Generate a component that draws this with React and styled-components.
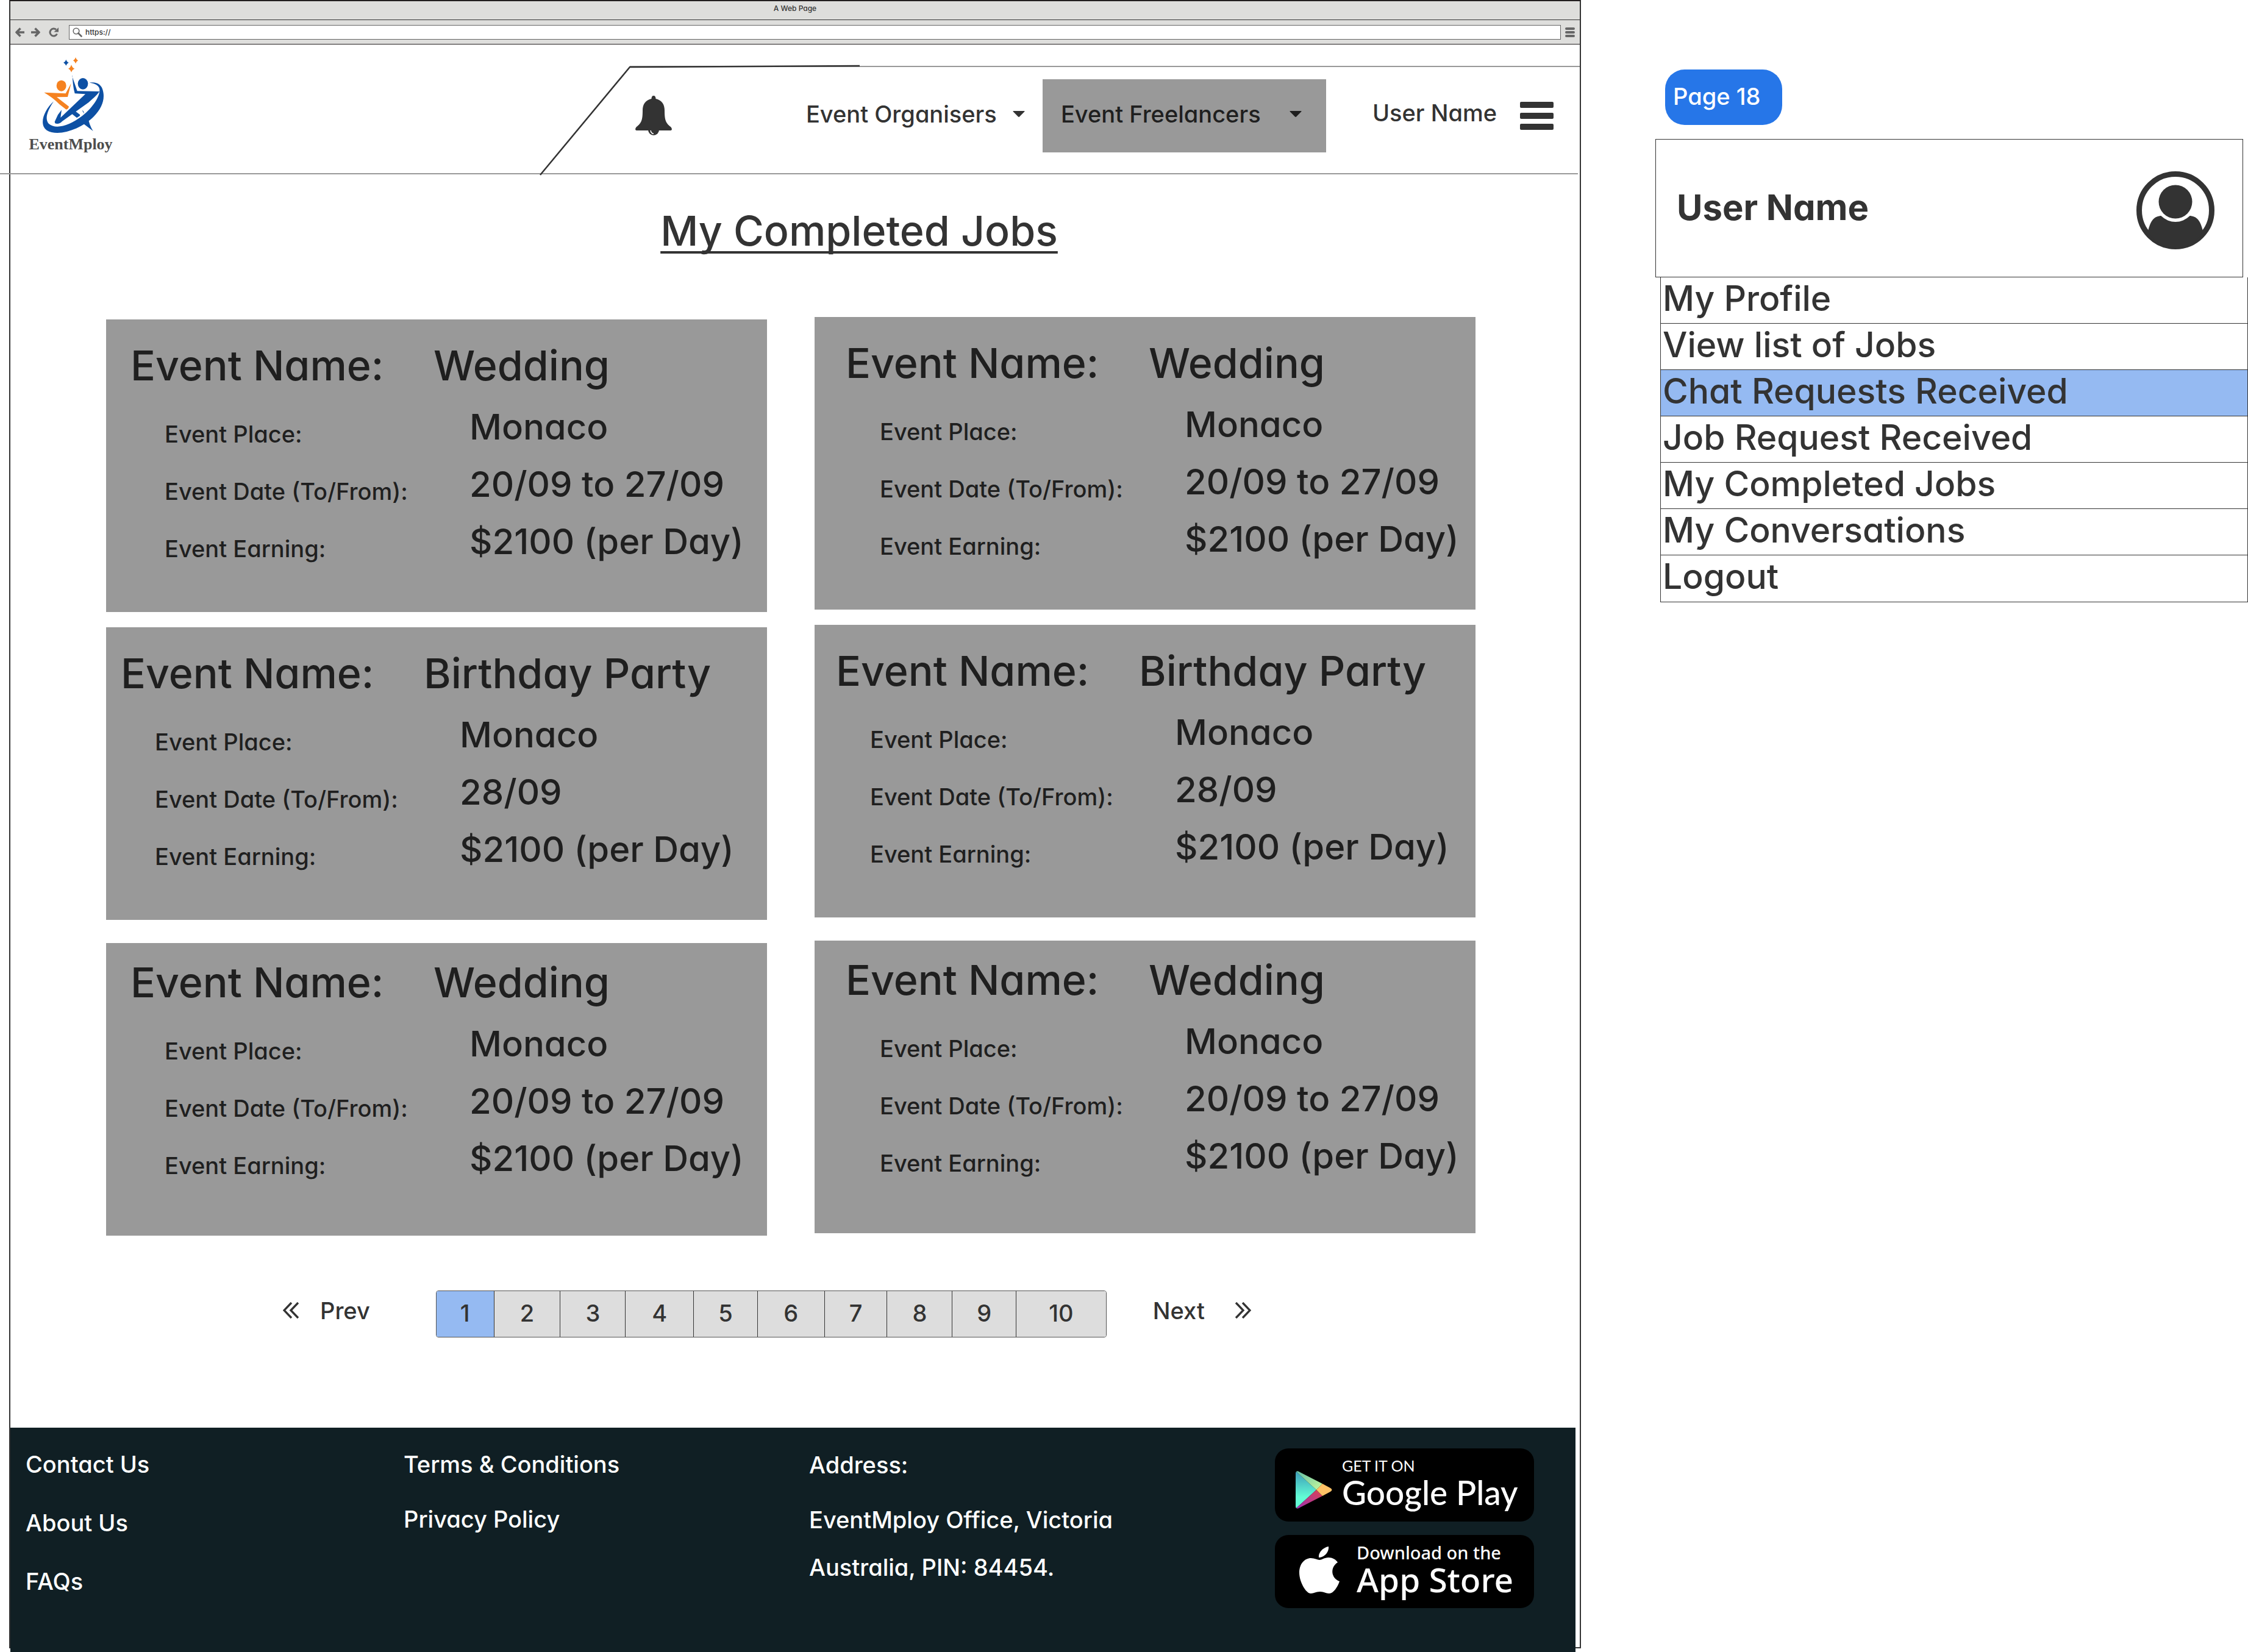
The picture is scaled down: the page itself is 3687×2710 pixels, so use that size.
import React from "react";
import styled, { createGlobalStyle, css } from "styled-components";

const INK = "#333333";
const CARD_INK = "#1f1f1f";
const GREY = "#999999";
const BLUE = "#95baf2";

const GlobalStyle = createGlobalStyle`
  *, *::before, *::after { box-sizing: border-box; }
  body {
    margin: 0;
    background: #ffffff;
    color: ${INK};
    font-family: Inter, "Liberation Sans", sans-serif;
    font-feature-settings: "cv11";
    font-size: 38px;
    font-weight: 500;
    line-height: 46px;
  }
  h1, h2, p, ul, dl, dd { margin: 0; padding: 0; font-weight: inherit; }
  ul { list-style: none; }
  a { color: inherit; text-decoration: none; }
  button, input { font: inherit; font-feature-settings: inherit; color: inherit; }
`;

const Page = styled.div`
  display: grid;
  grid-template-columns: minmax(0, 2593fr) minmax(0, 1094fr);
  align-items: start;
  overflow: hidden;
`;

const BrowserWindow = styled.div`
  margin: 0 0 8px 15px;
  border: 2px solid ${INK};
  border-top-color: #231f20;
`;

const TitleBar = styled.div`
  height: 31px;
  padding-top: 3px;
  background: #dededc;
  border-bottom: 1px solid ${INK};
  text-align: center;
  font-size: 12px;
  line-height: 18px;
`;

const Toolbar = styled.div`
  display: flex;
  align-items: center;
  height: 40px;
  padding: 0 8px;
  background: #dededc;
  border-bottom: 1px solid #231f20;
  color: #666666;
`;

const ToolButton = styled.button`
  display: flex;
  padding: 0;
  margin-right: ${(p) => p.$gap || 0}px;
  border: 0;
  background: none;
`;

const UrlBox = styled.label`
  flex: 1;
  display: flex;
  align-items: center;
  gap: 5px;
  height: 24px;
  margin-right: 7px;
  padding: 0 5px;
  background: #ffffff;
  border: 1px solid #666666;
`;

const UrlInput = styled.input`
  flex: 1;
  min-width: 0;
  padding: 0;
  border: 0;
  outline: 0;
  color: ${INK};
  font-size: 12px;
  line-height: 18px;
`;

const Header = styled.header`
  display: flex;
  align-items: flex-start;
  height: 213px;
  margin: 0 3px 0 -17px;
  padding-left: 40px;
  border-bottom: 2px solid ${GREY};
`;

const Brand = styled.a`
  display: flex;
  flex-direction: column;
  align-items: center;
  width: 152px;
  padding-top: 8px;
  color: #4d4d4d;
  font-family: "Liberation Serif", serif;
  font-size: 26px;
  font-weight: 700;
  line-height: 28px;
`;

const NavPanel = styled.div`
  position: relative;
  flex: 1;
  display: flex;
  align-items: center;
  height: 162px;
  margin: 35px -3px 0 841px;
  padding: 0 43px 0 9px;
  border-top: 2px solid ${GREY};
`;

const PanelOutline = styled.svg`
  position: absolute;
  left: -149px;
  top: -4px;
`;

const NavLinks = styled.nav`
  flex: 1;
  display: flex;
  align-items: center;
  justify-content: flex-end;
`;

const IconButton = styled.button`
  display: flex;
  padding: 0;
  border: 0;
  background: none;
`;

const NavButton = styled.button`
  display: flex;
  align-items: center;
  justify-content: space-between;
  height: 120px;
  border: 0;
  background: none;
  white-space: nowrap;
  width: 418px;
  padding: 0 29px 6px 30px;
  ${(p) =>
    p.$active &&
    css`
      width: 465px;
      padding: 0 40px 6px 30px;
      background: ${GREY};
      color: ${CARD_INK};
    `}
`;

const UserLink = styled.a`
  padding: 0 38px 10px 76px;
  white-space: nowrap;
`;

const PageTitle = styled.h1`
  padding: 48px 0 98px 210px;
  text-align: center;
  font-size: 68px;
  line-height: 88px;
  text-decoration: underline;
  text-decoration-thickness: 4px;
  text-underline-offset: 9px;
  text-decoration-skip-ink: none;
`;

const Board = styled.main`
  display: grid;
  grid-template-columns: minmax(0, 1fr) minmax(0, 1fr);
  gap: 78px;
  padding: 0 171px 0 157px;
`;

const Column = styled.section`
  display: flex;
  flex-direction: column;
  padding-top: ${(p) => (p.$left ? 4 : 0)}px;
`;

const Card = styled.article`
  min-height: 480px;
  margin-bottom: ${(p) => (p.$last ? 0 : p.$gap)}px;
  padding-top: ${(p) => (p.$last ? 24 : 35)}px;
  padding-left: ${(p) => p.$inset}px;
  background: ${GREY};
  color: ${CARD_INK};
  white-space: nowrap;
`;

const CardTitle = styled.h2`
  display: grid;
  grid-template-columns: 497px 1fr;
  font-size: 68px;
  line-height: 80px;
`;

const Details = styled.dl`
  padding-top: 2px;
`;

const Detail = styled.div`
  display: grid;
  grid-template-columns: 500px 1fr;
  align-items: end;
  height: 94px;
  padding-left: 56px;
`;

const Value = styled.dd`
  font-size: 58px;
  line-height: 70px;
`;

const Pagination = styled.nav`
  display: flex;
  align-items: center;
  padding: 90px 0 148px 447px;
`;

const StepLink = styled.a`
  display: flex;
  align-items: center;
  gap: ${(p) => p.$gap}px;
  padding-bottom: 12px;
`;

const PageList = styled.ul`
  display: grid;
  grid-template-columns: 94fr 109fr 107fr 112fr 105fr 110fr 103fr 107fr 105fr 148fr;
  width: 1100px;
  height: 77px;
  margin: 0 76px 0 108px;
  border: 1px solid #555555;
  border-radius: 4px;
  overflow: hidden;
`;

const PageItem = styled.li`
  display: flex;
  background: ${(p) => (p.$active ? BLUE : "#dddddd")};
  & + & { border-left: 1px solid ${INK}; }
`;

const PageButton = styled.button`
  flex: 1;
  padding: 0 0 4px;
  border: 0;
  background: none;
`;

const Footer = styled.footer`
  display: flex;
  height: 370px;
  margin: 0 7px -10px 0;
  padding: 34px 68px 0 25px;
  background: #101f24;
  color: #ffffff;
  white-space: nowrap;
`;

const FooterColumn = styled.ul`
  display: flex;
  flex-direction: column;
  gap: ${(p) => p.$gap}px;
  width: ${(p) => p.$width}px;
  padding-top: 3px;
`;

const Address = styled.address`
  flex: 1;
  padding-top: 4px;
  font-style: normal;
`;

const AddressLine = styled.p`
  padding-bottom: ${(p) => (p.$wide ? 44 : 32)}px;
`;

const Stores = styled.div`
  display: flex;
  flex-direction: column;
  gap: 22px;
`;

const StoreBadge = styled.a`
  display: flex;
  align-items: center;
  gap: ${(p) => p.$gap}px;
  width: 425px;
  height: 120px;
  padding: ${(p) => p.$pad};
  border-radius: 22px;
  background: #000000;
`;

const StoreText = styled.span`
  display: flex;
  flex-direction: column;
  padding-bottom: ${(p) => p.$lift}px;
  font-family: ${(p) => p.$face}, sans-serif;
`;

const StoreSmall = styled.span`
  font-size: ${(p) => p.$size}px;
  font-weight: ${(p) => p.$weight};
  line-height: 30px;
`;

const StoreName = styled.span`
  font-size: 55px;
  line-height: 58px;
`;

const Side = styled.aside`
  padding: 114px 0 0 122px;
`;

const PageTag = styled.div`
  width: 192px;
  margin: 0 0 23px 16px;
  padding: 21px 0 24px 13px;
  border-radius: 32px;
  background: #2676e8;
  color: #ffffff;
`;

const UserBox = styled.div`
  display: flex;
  align-items: center;
  justify-content: space-between;
  height: 227px;
  margin-right: 8px;
  padding: 6px 46px 0 34px;
  border: 1px solid ${INK};
`;

const UserHeading = styled.h2`
  padding-bottom: 10px;
  font-size: 58px;
  line-height: 70px;
  font-weight: 700;
`;

const Menu = styled.ul`
  margin-left: 8px;
  border: 1px solid ${INK};
  border-top-width: 0;
`;

const MenuItem = styled.li`
  height: 76px;
  border-bottom: 1px solid ${INK};
  background: ${(p) => (p.$active ? BLUE : "transparent")};
  &:last-child { border-bottom: 0; }
`;

const MenuLink = styled.a`
  display: block;
  padding-left: 3px;
  font-size: 57px;
  line-height: 70px;
`;

const Arrow = ({ back }) => (
  <svg width="16" height="16" viewBox="0 0 16 16" aria-hidden="true">
    <path
      d={back ? "M15 8H3M8.500 1.500 2 8l6.500 6.500" : "M1 8h12M7.500 1.500 14 8l-6.500 6.500"}
      fill="none" stroke="currentColor" strokeWidth="3.600" strokeLinejoin="round" />
  </svg>
);

const Reload = () => (
  <svg width="18" height="16" viewBox="0 0 18 16" aria-hidden="true">
    <path d="M14.500 10.500A6 6 0 1 1 13 3.500" fill="none" stroke="currentColor" strokeWidth="3" />
    <path d="M17 0v7.500H9.500z" fill="currentColor" />
  </svg>
);

const Search = () => (
  <svg width="16" height="16" viewBox="0 0 16 16" aria-hidden="true">
    <circle cx="6" cy="6" r="4.800" fill="none" stroke="#666" strokeWidth="1.600" />
    <path d="m9.500 9.500 5 5" stroke="#666" strokeWidth="2.600" strokeLinecap="round" />
  </svg>
);

const Bars = ({ width, height, thick }) => (
  <svg width={width} height={height} aria-hidden="true">
    {[0, (height - thick) / 2, height - thick].map((y) => (
      <rect key={y} y={y} width={width} height={thick} rx="2" fill="currentColor" />
    ))}
  </svg>
);

const Caret = () => (
  <svg width="20" height="10" viewBox="0 0 20 10" aria-hidden="true">
    <path d="M1 0h18q1 0 .4 1L11 9.500q-1 .8-2 0L.6 1Q0 0 1 0z" fill="currentColor" />
  </svg>
);

const Bell = () => (
  <svg width="60" height="66" viewBox="0 0 60 66" aria-hidden="true">
    <path d="M30 0c2.500 0 3.500 2 3.500 5C43 7 48 14 48 24c0 16 2 21 10 27 2 2 3 6 0 6H2c-3 0-2-4 0-6 8-6 10-11 10-27C12 14 17 7 26.500 5c0-3 1-5 3.500-5z" fill={INK} />
    <path d="M21 56a9 9 0 0 0 18 0z" fill={INK} />
    <path d="M25 57q1 5 5 5.500" fill="none" stroke="#fff" strokeWidth="1.500" />
  </svg>
);

const Chevrons = ({ back }) => (
  <svg width="26" height="27" viewBox="0 0 26 27" aria-hidden="true">
    <path
      d={back ? "M14 1 2 13.500 14 26M25 1 13 13.500 25 26" : "M12 1l12 12.500L12 26M1 1l12 12.500L1 26"}
      fill="none" stroke={INK} strokeWidth="3.400" />
  </svg>
);

const Avatar = () => (
  <svg width="128" height="128" viewBox="0 0 128 128" role="img" aria-label="User">
    <circle cx="64" cy="64" r="59.500" fill="#fff" stroke={INK} strokeWidth="9" />
    <path d="M19 98C23 82 28 73 42 73h44c14 0 19 9 23 25-9 18-27 27-45 27S28 116 19 98z" fill={INK} />
    <circle cx="64" cy="50" r="33" fill="#fff" />
    <circle cx="64" cy="50" r="27.500" fill={INK} />
  </svg>
);

const Logo = () => (
  <svg width="152" height="142" viewBox="0 0 456 426" aria-hidden="true">
    <g fill="#0d50a4">
      <path d="M205 50q4 12 13 15-9 4-13 15-4-11-13-15 9-3 13-15z" />
      <ellipse cx="288" cy="169" rx="25" ry="28" />
      <path d="M234 130l26 75 110 2c-14 20-34 36-54 54L186 354c-10 12-24 14-35 10l-2-8 16-34 18-24-5 38 122-116-52-3c-8-28-10-57-12-87z" />
      <path d="M240 296l32 24q4 4 0 8l-14 9-32-26z" />
      <path d="M320 164c34-6 62 6 68 46 8 42-10 84-46 120-64 64-176 102-232 68-40-28-14-98 34-142-30 46-46 84-24 110 34 30 102 10 164-38 58-46 88-100 86-130-2-22-22-30-50-34z" />
      <path d="M284 300q10 4 9 16-5-10-9-16z" />
      <path d="M286 362l28-26q4 34 24 66z" />
    </g>
    <g fill="#f58220">
      <path d="M252 39q3 12 12 16-9 4-12 15-3-11-12-15 9-4 12-16z" />
      <path d="M231 75q4 16 16 20-12 5-16 18-4-13-15-18 11-4 15-20z" />
      <ellipse cx="182" cy="179" rx="24" ry="27" />
      <path d="M97 212l106 5 27-50-17 67-54 1 60 46q-2 12-13 15l-34-26c-22-24-48-42-75-58z" />
    </g>
  </svg>
);

const PlayMark = () => (
  <svg width="60" height="62" viewBox="0 0 60 62" aria-hidden="true">
    <defs>
      <linearGradient id="playBlue" x1="0" y1="0" x2="0" y2="1">
        <stop offset="0" stopColor="#3c9cb8" />
        <stop offset=".7" stopColor="#62fcd5" />
      </linearGradient>
      <linearGradient id="playGreen" x1="0" y1="0" x2="1" y2="1">
        <stop offset="0" stopColor="#62bfa6" />
        <stop offset="1" stopColor="#c8fa9c" />
      </linearGradient>
      <linearGradient id="playRed" x1="0" y1="1" x2="1" y2="0">
        <stop offset="0" stopColor="#9c2fb0" />
        <stop offset="1" stopColor="#dc4354" />
      </linearGradient>
    </defs>
    <path d="M1 1 34 31 1 61Q0 60 0 58V4Q0 2 1 1z" fill="url(#playBlue)" />
    <path d="M1 1Q3-1 7 2L44 21 34 31z" fill="url(#playGreen)" />
    <path d="M1 61q2 2 6-1l37-19-10-10z" fill="url(#playRed)" />
    <path d="m44 21 13 7q5 3 0 6l-13 7-10-10z" fill="#ffc266" />
  </svg>
);

const AppleMark = () => (
  <svg width="66" height="78" viewBox="0 0 66 78" aria-hidden="true">
    <path d="M48 0c1 9-7 18-16 18-1-9 8-17 16-18z" fill="#fff" />
    <path d="M33 22c4 0 8-4 15-4 6 0 12 3 15 8-13 8-11 26 3 31-3 9-10 20-17 20-6 0-8-3-15-3s-10 3-15 3C11 77 0 58 0 43c0-15 9-24 19-24 6 0 11 3 14 3z" fill="#fff" />
  </svg>
);

const WEDDING = { name: "Wedding", place: "Monaco", date: "20/09 to 27/09", earning: "$2100 (per Day)" };
const BIRTHDAY = { name: "Birthday Party", place: "Monaco", date: "28/09", earning: "$2100 (per Day)" };
const JOBS = [WEDDING, BIRTHDAY, WEDDING];

const MENU = [
  "My Profile",
  "View list of Jobs",
  "Chat Requests Received",
  "Job Request Received",
  "My Completed Jobs",
  "My Conversations",
  "Logout",
];

function JobCard({ job, inset, last, first }) {
  return (
    <Card $inset={job === BIRTHDAY ? inset - 16 : inset} $last={last} $gap={first ? 25 : 38}>
      <CardTitle>
        <span>Event Name:</span>
        <span>{job.name}</span>
      </CardTitle>
      <Details>
        <Detail><dt>Event Place:</dt><Value>{job.place}</Value></Detail>
        <Detail><dt>Event Date (To/From):</dt><Value>{job.date}</Value></Detail>
        <Detail><dt>Event Earning:</dt><Value>{job.earning}</Value></Detail>
      </Details>
    </Card>
  );
}

function JobColumn({ left, inset }) {
  return (
    <Column $left={left}>
      {JOBS.map((job, i) => (
        <JobCard key={i} job={job} inset={inset} first={i === 0} last={i === JOBS.length - 1} />
      ))}
    </Column>
  );
}

export default function App() {
  return (
    <Page>
      <GlobalStyle />
      <BrowserWindow>
        <TitleBar>A Web Page</TitleBar>
        <Toolbar>
          <ToolButton $gap={9} aria-label="Back"><Arrow back /></ToolButton>
          <ToolButton $gap={13} aria-label="Forward"><Arrow /></ToolButton>
          <ToolButton $gap={16} aria-label="Reload"><Reload /></ToolButton>
          <UrlBox>
            <Search />
            <UrlInput aria-label="Address" defaultValue="https://" />
          </UrlBox>
          <ToolButton aria-label="Browser menu"><Bars width={16} height={16} thick={4} /></ToolButton>
        </Toolbar>

        <Header>
          <Brand href="#home">
            <Logo />
            EventMploy
          </Brand>
          <NavPanel>
            <PanelOutline width="528" height="182" viewBox="0 0 528 182" aria-hidden="true">
              <path d="M2 181 149 4 526 2" fill="none" stroke={INK} strokeWidth="2.500" />
            </PanelOutline>
            <IconButton aria-label="Notifications"><Bell /></IconButton>
            <NavLinks>
              <NavButton aria-haspopup="menu">Event Organisers<Caret /></NavButton>
              <NavButton aria-haspopup="menu" $active>Event Freelancers<Caret /></NavButton>
              <UserLink href="#user">User Name</UserLink>
              <IconButton aria-label="Menu"><Bars width={55} height={46} thick={10} /></IconButton>
            </NavLinks>
          </NavPanel>
        </Header>

        <PageTitle>My Completed Jobs</PageTitle>
        <Board>
          <JobColumn left inset={40} />
          <JobColumn inset={51} />
        </Board>

        <Pagination aria-label="Pages">
          <StepLink href="#prev" $gap={35}><Chevrons back />Prev</StepLink>
          <PageList>
            {[1, 2, 3, 4, 5, 6, 7, 8, 9, 10].map((n) => (
              <PageItem key={n} $active={n === 1}><PageButton>{n}</PageButton></PageItem>
            ))}
          </PageList>
          <StepLink href="#next" $gap={50}>Next<Chevrons /></StepLink>
        </Pagination>

        <Footer>
          <FooterColumn $gap={50} $width={620}>
            <li><a href="#contact">Contact Us</a></li>
            <li><a href="#about">About Us</a></li>
            <li><a href="#faqs">FAQs</a></li>
          </FooterColumn>
          <FooterColumn $gap={44} $width={665}>
            <li><a href="#terms">Terms &amp; Conditions</a></li>
            <li><a href="#privacy">Privacy Policy</a></li>
          </FooterColumn>
          <Address>
            <AddressLine $wide>Address:</AddressLine>
            <AddressLine>EventMploy Office, Victoria</AddressLine>
            <AddressLine>Australia, PIN: 84454.</AddressLine>
          </Address>
          <Stores>
            <StoreBadge href="#google-play" $gap={16} $pad="16px 0 0 34px">
              <PlayMark />
              <StoreText $face="Lato" $lift={22}>
                <StoreSmall $size={25} $weight={400}>GET IT ON</StoreSmall>
                <StoreName>Google Play</StoreName>
              </StoreText>
            </StoreBadge>
            <StoreBadge href="#app-store" $gap={28} $pad="0 0 4px 40px">
              <AppleMark />
              <StoreText $face='"Noto Sans"' $lift={0}>
                <StoreSmall $size={29} $weight={500}>Download on the</StoreSmall>
                <StoreName>App Store</StoreName>
              </StoreText>
            </StoreBadge>
          </Stores>
        </Footer>
      </BrowserWindow>

      <Side>
        <PageTag>Page 18</PageTag>
        <UserBox>
          <UserHeading>User Name</UserHeading>
          <Avatar />
        </UserBox>
        <Menu>
          {MENU.map((label) => (
            <MenuItem key={label} $active={label === "Chat Requests Received"}>
              <MenuLink href="#menu">{label}</MenuLink>
            </MenuItem>
          ))}
        </Menu>
      </Side>
    </Page>
  );
}
